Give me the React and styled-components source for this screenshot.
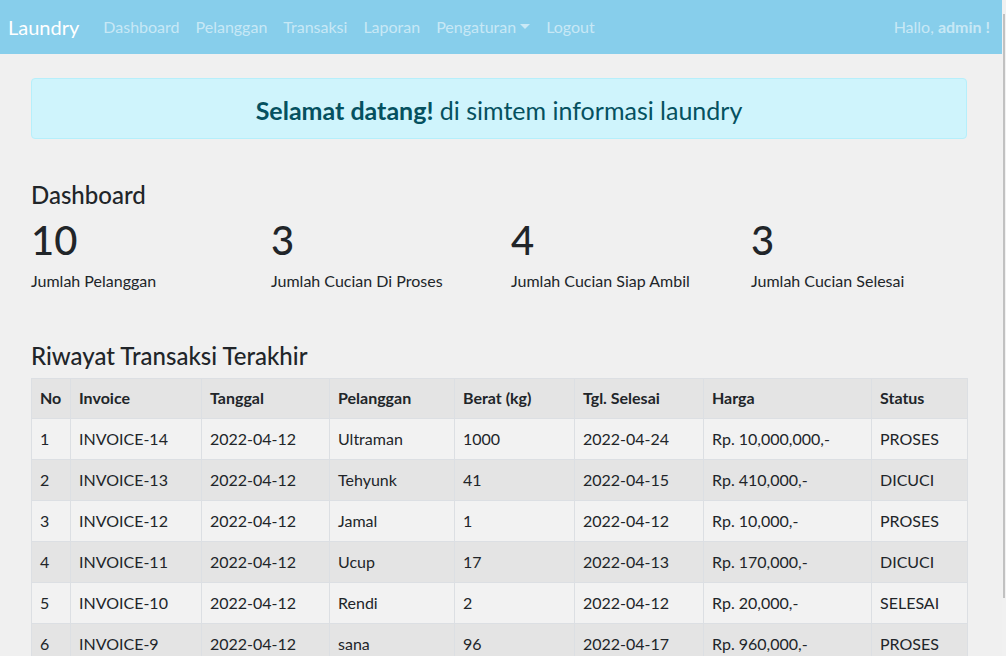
import styled, { createGlobalStyle } from "styled-components";

const GlobalStyle = createGlobalStyle`
  html, body {
    margin: 0;
    padding: 0;
    height: 100%;
    overflow: hidden;
  }
  body {
    background-color: #f0f0f0;
    color: #212529;
    font-family: "Segoe UI", Lato, "Noto Sans", sans-serif;
    font-size: 16px;
    line-height: 1.5;
  }
`;

const Page = styled.div`
  width: 1002px;
`;

const Navbar = styled.nav`
  height: 54px;
  display: flex;
  align-items: center;
  padding: 0 12px 0 8px;
  background-color: #87ceeb;
  box-sizing: border-box;
`;

const Brand = styled.a`
  color: #fff;
  font-size: 20px;
  margin-right: 16px;
  text-decoration: none;
`;

const NavList = styled.ul`
  display: flex;
  list-style: none;
  margin: 0;
  padding: 0;
  flex: 1;
`;

const NavLink = styled.a`
  display: block;
  padding: 0 8px;
  color: rgba(255, 255, 255, 0.55);
  text-decoration: none;

  ${({ $dropdown }) =>
    $dropdown &&
    `
    &::after {
      content: "";
      display: inline-block;
      margin-left: 4px;
      vertical-align: 4px;
      border-top: 5px solid;
      border-left: 5px solid transparent;
      border-right: 5px solid transparent;
    }
  `}
`;

const Greeting = styled.span`
  color: rgba(255, 255, 255, 0.55);

  b {
    font-weight: 700;
  }
`;

const Container = styled.main`
  padding: 24px 35px 0 31px;
`;

const Alert = styled.div`
  height: 61px;
  box-sizing: border-box;
  padding-top: 3px;
  display: flex;
  align-items: center;
  justify-content: center;
  background-color: #cff4fc;
  border: 1px solid #b6effb;
  border-radius: 4px;
  color: #055160;
  font-size: 25px;
  line-height: 1.2;
`;

const Heading = styled.h4`
  margin: ${({ $top }) => $top}px 0 0;
  font-size: 24px;
  font-weight: 500;
  line-height: 1.2;
`;

const Stats = styled.div`
  display: grid;
  grid-template-columns: 240px 240px 240px 1fr;
  margin-top: 6px;
`;

const StatValue = styled.div`
  font-size: 40px;
  font-weight: 500;
  line-height: 1.2;
`;

const StatLabel = styled.div`
  margin-top: 5px;
`;

const Table = styled.table`
  width: 100%;
  margin-top: 7px;
  border-collapse: collapse;
  table-layout: fixed;
`;

const Th = styled.th`
  text-align: left;
  font-weight: 700;
  padding: 7px 8px 8px;
  border: 1px solid #dcdfe3;
  background-color: #e4e4e4;
  line-height: 24px;
`;

const Row = styled.tr`
  background-color: ${({ $odd }) => ($odd ? "#f2f2f2" : "#e4e4e4")};
`;

const Td = styled.td`
  padding: 8px;
  border: 1px solid #dcdfe3;
  line-height: 24px;
  white-space: nowrap;
`;

const Scrollbar = styled.div`
  position: fixed;
  top: 0;
  right: 0;
  width: 4px;
  height: 100%;
  background-color: #f1f1f1;

  &::after {
    content: "";
    position: absolute;
    left: 1px;
    top: 14px;
    width: 2px;
    height: 584px;
    background-color: #c1c1c1;
  }
`;

const columns = [
  { label: "No", width: 39 },
  { label: "Invoice", width: 131 },
  { label: "Tanggal", width: 128 },
  { label: "Pelanggan", width: 125 },
  { label: "Berat (kg)", width: 120 },
  { label: "Tgl. Selesai", width: 129 },
  { label: "Harga", width: 168 },
  { label: "Status", width: 96 },
];

const transactions = [
  ["1", "INVOICE-14", "2022-04-12", "Ultraman", "1000", "2022-04-24", "Rp. 10,000,000,-", "PROSES"],
  ["2", "INVOICE-13", "2022-04-12", "Tehyunk", "41", "2022-04-15", "Rp. 410,000,-", "DICUCI"],
  ["3", "INVOICE-12", "2022-04-12", "Jamal", "1", "2022-04-12", "Rp. 10,000,-", "PROSES"],
  ["4", "INVOICE-11", "2022-04-12", "Ucup", "17", "2022-04-13", "Rp. 170,000,-", "DICUCI"],
  ["5", "INVOICE-10", "2022-04-12", "Rendi", "2", "2022-04-12", "Rp. 20,000,-", "SELESAI"],
  ["6", "INVOICE-9", "2022-04-12", "sana", "96", "2022-04-17", "Rp. 960,000,-", "PROSES"],
];

const stats = [
  { value: 10, label: "Jumlah Pelanggan" },
  { value: 3, label: "Jumlah Cucian Di Proses" },
  { value: 4, label: "Jumlah Cucian Siap Ambil" },
  { value: 3, label: "Jumlah Cucian Selesai" },
];

const menu = ["Dashboard", "Pelanggan", "Transaksi", "Laporan", "Pengaturan", "Logout"];

export default function App() {
  return (
    <Page>
      <GlobalStyle />
      <Navbar>
        <Brand href="#">Laundry</Brand>
        <NavList>
          {menu.map((item) => (
            <li key={item}>
              <NavLink href="#" $dropdown={item === "Pengaturan"}>
                {item}
              </NavLink>
            </li>
          ))}
        </NavList>
        <Greeting>
          Hallo, <b>admin !</b>
        </Greeting>
      </Navbar>

      <Container>
        <Alert>
          <span>
            <b>Selamat datang!</b> di simtem informasi laundry
          </span>
        </Alert>

        <Heading $top={42}>Dashboard</Heading>
        <Stats>
          {stats.map((s) => (
            <div key={s.label}>
              <StatValue>{s.value}</StatValue>
              <StatLabel>{s.label}</StatLabel>
            </div>
          ))}
        </Stats>

        <Heading $top={49}>Riwayat Transaksi Terakhir</Heading>
        <Table>
          <colgroup>
            {columns.map((c) => (
              <col key={c.label} style={{ width: c.width }} />
            ))}
          </colgroup>
          <thead>
            <tr>
              {columns.map((c) => (
                <Th key={c.label}>{c.label}</Th>
              ))}
            </tr>
          </thead>
          <tbody>
            {transactions.map((row, i) => (
              <Row key={row[1]} $odd={i % 2 === 0}>
                {row.map((cell, j) => (
                  <Td key={j}>{cell}</Td>
                ))}
              </Row>
            ))}
          </tbody>
        </Table>
      </Container>
      <Scrollbar />
    </Page>
  );
}
